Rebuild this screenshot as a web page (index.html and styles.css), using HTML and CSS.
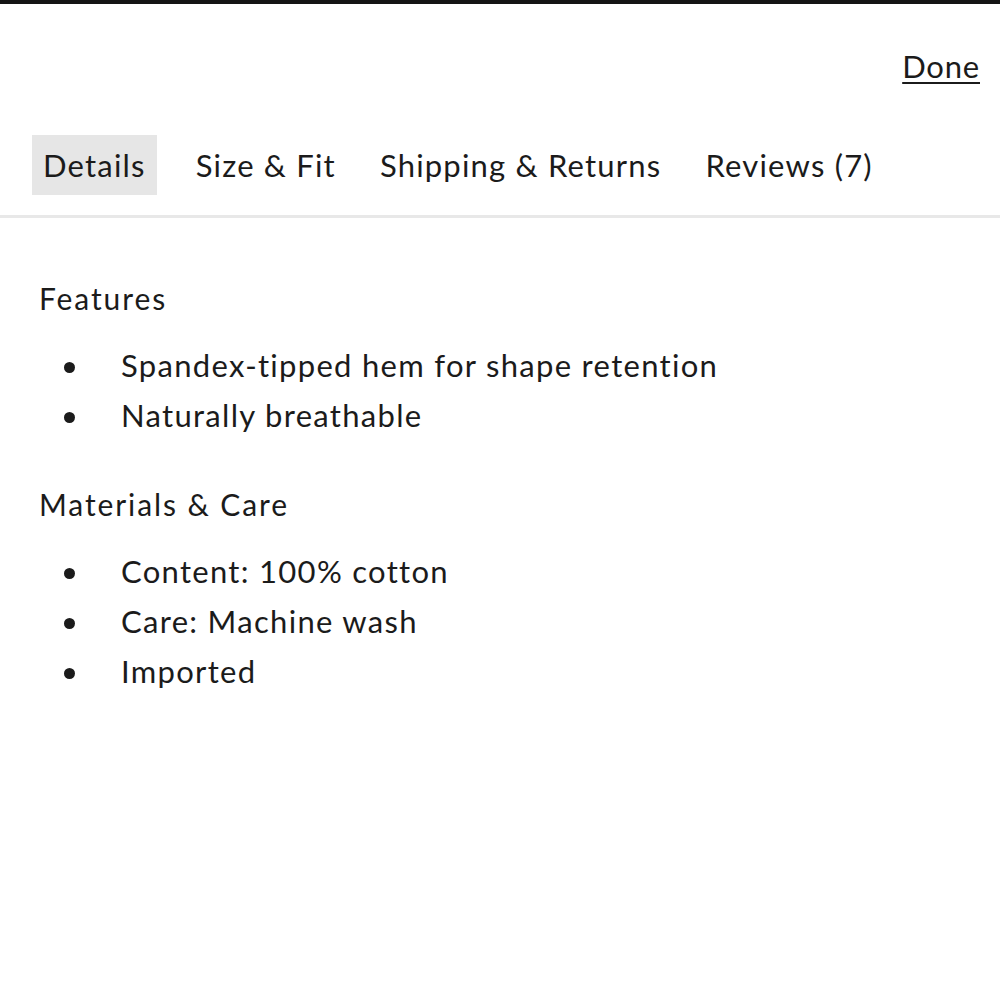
FILE: index.html
```html
<!DOCTYPE html>
<html lang="en">
<head>
<meta charset="utf-8">
<title>Product details</title>
<link rel="stylesheet" href="styles.css">
</head>
<body>
<div class="topbar"></div>
<header class="sheet-header">
  <a class="done" href="#">Done</a>
</header>
<nav class="tabs">
  <a class="tab active" href="#">Details</a>
  <a class="tab" href="#">Size &amp; Fit</a>
  <a class="tab" href="#">Shipping &amp; Returns</a>
  <a class="tab" href="#">Reviews (7)</a>
</nav>
<main class="details">
  <section class="group">
    <h2 class="group-title">Features</h2>
    <ul class="bullets">
      <li>Spandex-tipped hem for shape retention</li>
      <li>Naturally breathable</li>
    </ul>
  </section>
  <section class="group">
    <h2 class="group-title">Materials &amp; Care</h2>
    <ul class="bullets">
      <li>Content: 100% cotton</li>
      <li>Care: Machine wash</li>
      <li>Imported</li>
    </ul>
  </section>
</main>
</body>
</html>
```

FILE: styles.css
```css
* { box-sizing: border-box; }

html, body {
  margin: 0;
  padding: 0;
  background: #ffffff;
}

body {
  font-family: Lato, "Liberation Sans", sans-serif;
  color: #1b1b1b;
  width: 1000px;
  height: 1000px;
  overflow: hidden;
}

.topbar {
  height: 4px;
  background: #151515;
}

.sheet-header {
  display: flex;
  justify-content: flex-end;
  padding: 42px 20px 0 0;
  height: 96px;
}

.done {
  font-size: 31px;
  line-height: 40px;
  height: 44px;
  color: #1b1b1b;
  text-decoration: underline;
  text-underline-offset: 4px;
  text-decoration-thickness: 2px;
  letter-spacing: 0.8px;
}

.tabs {
  display: flex;
  align-items: center;
  padding: 35px 0 20px 32px;
  border-bottom: 3px solid #e8e8e8;
}

.tab {
  display: block;
  height: 60px;
  line-height: 60px;
  padding: 0 11px;
  margin-right: 22px;
  font-size: 31px;
  color: #1b1b1b;
  text-decoration: none;
  letter-spacing: 1.2px;
}

.tab.active {
  background: #e6e6e6;
  margin-right: 28px;
}

.details {
  padding: 62px 0 0 39px;
}

.group {
  margin-bottom: 46px;
}

.group-title {
  margin: 0;
  font-size: 30px;
  font-weight: 400;
  line-height: 36px;
  letter-spacing: 1.9px;
}

.bullets {
  list-style: none;
  margin: 24px 0 0 0;
  padding: 0;
}

.bullets li {
  display: flex;
  align-items: center;
  height: 50px;
  font-size: 31px;
  letter-spacing: 1.3px;
}

.bullets li::before {
  content: "";
  width: 11px;
  height: 11px;
  border-radius: 50%;
  background: #1b1b1b;
  margin: 4px 46px 0 25px;
  flex: none;
}
```
